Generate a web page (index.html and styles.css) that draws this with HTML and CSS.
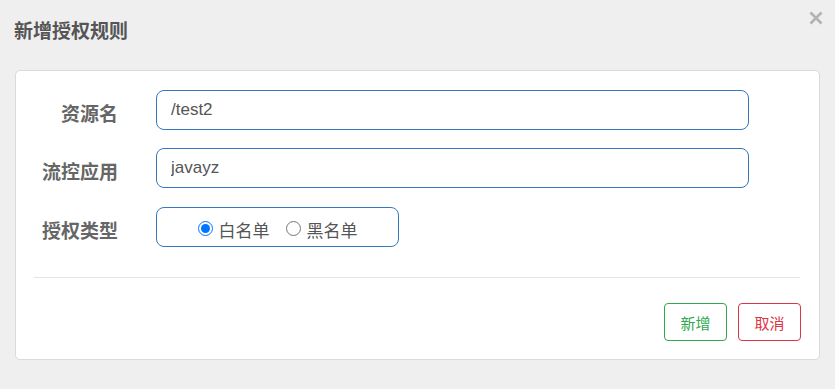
FILE: index.html
```html
<!DOCTYPE html>
<html lang="zh-CN">
<head>
<meta charset="utf-8">
<title>新增授权规则</title>
<link rel="stylesheet" href="styles.css">
</head>
<body>
<div class="dialog">
  <div class="header">
    <h3 class="title">新增授权规则</h3>
    <button class="close" type="button" aria-label="关闭">
      <svg width="14" height="14" viewBox="0 0 14 14"><path d="M1.5 1.5 L12.5 12.5 M12.5 1.5 L1.5 12.5" stroke="#b3b3b3" stroke-width="2.6" stroke-linecap="butt"/></svg>
    </button>
  </div>
  <div class="card">
    <form class="form">
      <label class="label">资源名</label>
      <input class="field" type="text" value="/test2">
      <label class="label">流控应用</label>
      <input class="field" type="text" value="javayz">
      <label class="label third">授权类型</label>
      <div class="radio-box third">
        <label class="radio"><input type="radio" name="t" checked><span>白名单</span></label>
        <label class="radio"><input type="radio" name="t"><span>黑名单</span></label>
      </div>
    </form>
    <div class="divider"></div>
    <div class="actions">
      <button class="btn btn-ok" type="button">新增</button>
      <button class="btn btn-cancel" type="button">取消</button>
    </div>
  </div>
</div>
</body>
</html>
```

FILE: styles.css
```css
html, body {
  margin: 0;
  padding: 0;
  background: #efefef;
}
body {
  font-family: "Liberation Sans", "Noto Sans CJK SC", sans-serif;
  width: 835px;
  height: 389px;
  overflow: hidden;
}
.header {
  height: 70px;
  box-sizing: border-box;
  display: flex;
  justify-content: space-between;
  align-items: flex-start;
  padding: 0 12px 0 14px;
}
.title {
  margin: 18px 0 0 0;
  font-family: "Noto Sans CJK SC", sans-serif;
  font-size: 19px;
  line-height: 24px;
  font-weight: 700;
  color: #555;
}
.close {
  margin-top: 11px;
  padding: 0;
  border: 0;
  background: transparent;
  width: 14px;
  height: 14px;
  display: flex;
}
.card {
  margin: 0 15px;
  background: #fff;
  border: 1px solid #dadada;
  border-radius: 5px;
  padding: 19px 18px 18px 18px;
}
.form {
  display: grid;
  grid-template-columns: 84px 593px;
  column-gap: 38px;
  row-gap: 18px;
  margin: 0;
}
.label {
  display: flex;
  align-items: center;
  justify-content: flex-end;
  padding-top: 4px;
  font-family: "Noto Sans CJK SC", sans-serif;
  font-size: 19px;
  font-weight: 700;
  color: #666;
}
.third {
  margin-top: 1px;
}
.field {
  box-sizing: border-box;
  height: 40px;
  width: 593px;
  margin: 0;
  border: 1px solid #3479bd;
  border-radius: 8px;
  padding: 0 14px;
  font-family: "Liberation Sans", "Noto Sans CJK SC", sans-serif;
  font-size: 17px;
  color: #555;
  outline: none;
}
.radio-box {
  box-sizing: border-box;
  width: 243px;
  height: 40px;
  border: 1px solid #3479bd;
  border-radius: 8px;
  display: flex;
  align-items: center;
  justify-content: center;
  gap: 16px;
  padding-top: 3px;
}
.radio {
  display: flex;
  align-items: center;
  gap: 6px;
  font-family: "Noto Sans CJK SC", sans-serif;
  font-size: 17px;
  color: #555;
}
.radio input {
  width: 15px;
  height: 15px;
  margin: 0;
  accent-color: #0075ff;
}
.radio span {
  line-height: 20px;
  margin-top: 2px;
}
.divider {
  height: 1px;
  background: #e5e5e5;
  margin-top: 30px;
  margin-right: 1px;
}
.actions {
  display: flex;
  justify-content: flex-end;
  gap: 11px;
  margin-top: 25px;
}
.btn {
  box-sizing: border-box;
  width: 63px;
  height: 38px;
  background: #fff;
  border-radius: 4px;
  font-family: "Noto Sans CJK SC", sans-serif;
  font-size: 15px;
  padding: 0;
}
.btn-ok {
  border: 1px solid #2fa84f;
  color: #2fa84f;
}
.btn-cancel {
  border: 1px solid #dc3545;
  color: #dc3545;
}
```
